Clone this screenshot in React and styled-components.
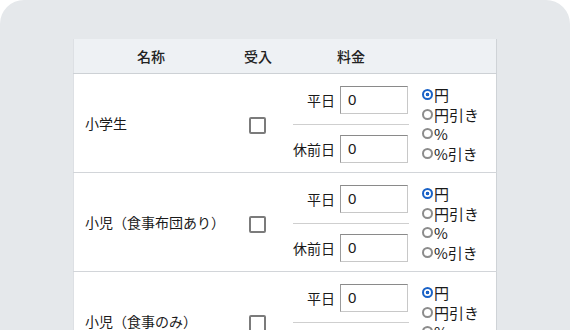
import React from "react";
import styled, { createGlobalStyle } from "styled-components";

const GlobalStyle = createGlobalStyle`
	html, body {
		margin: 0;
		padding: 0;
		background: #ffffff;
	}
	body {
		font-family: "Noto Sans CJK JP", "Noto Sans", sans-serif;
		color: #1a1a1a;
	}
`;

const Panel = styled.div`
	width: 570px;
	height: 330px;
	box-sizing: border-box;
	background: #e5e8eb;
	border-radius: 24px 24px 0 0;
	padding: 39px 0 0 73px;
	overflow: hidden;
`;

const Table = styled.table`
	width: 422px;
	table-layout: fixed;
	border-collapse: collapse;
	background: #fff;
	border-left: 1px solid #dde0e4;
	border-right: 1px solid #cfd3d7;
`;

const HeadCell = styled.th`
	height: 34px;
	padding: 0;
	background: #eef1f4;
	border-bottom: 1px solid #cdd1d5;
	font-size: 14px;
	font-weight: 500;
	color: #222;
	text-align: center;
	width: ${(p) => p.$w}px;
`;

const Row = styled.tr`
	border-bottom: 1px solid #d2d5d9;
`;

const NameCell = styled.td`
	padding: 0 0 0 11px;
	font-size: 14px;
	white-space: nowrap;
	vertical-align: middle;
`;

const CheckCell = styled.td`
	padding: 0;
	text-align: center;
	vertical-align: middle;
`;

const CheckBox = styled.span`
	display: inline-block;
	width: 17px;
	height: 17px;
	box-sizing: border-box;
	border: 2.5px solid #7b7b7b;
	border-radius: 2px;
	background: #fff;
	vertical-align: middle;
	margin-left: -1px;
`;

const PriceCell = styled.td`
	padding: 12px 5px 9px 5px;
	vertical-align: top;
`;

const PriceLine = styled.div`
	display: flex;
	align-items: center;
	gap: 5px;
`;

const PriceLabel = styled.span`
	width: 42px;
	text-align: right;
	font-size: 14px;
	white-space: nowrap;
`;

const PriceInput = styled.div`
	width: 68px;
	height: 28px;
	box-sizing: border-box;
	border: 1px solid #c8c8c8;
	border-top-color: #8a8a8a;
	border-left-color: #9a9a9a;
	padding-left: 7px;
	font-family: "Liberation Sans", Arial, sans-serif;
	font-size: 15px;
	line-height: 26px;
	color: #1a1a1a;
`;

const Divider = styled.div`
	height: 1px;
	background: #cfcfcf;
	margin: 10px 0;
	width: 116px;
`;

const RadioCell = styled.td`
	padding: 0 0 0 8px;
	vertical-align: middle;
`;

const RadioList = styled.div`
	display: flex;
	flex-direction: column;
	margin-top: 2px;
`;

const RadioItem = styled.div`
	display: flex;
	align-items: center;
	height: 19.7px;
	font-size: 15px;
	white-space: nowrap;
`;

const RadioDot = styled.span`
	width: 11px;
	height: 11px;
	box-sizing: border-box;
	border-radius: 50%;
	border: 2.8px solid ${(p) => (p.$on ? "#1a62c7" : "#8c8c8c")};
	background: ${(p) =>
		p.$on ? "radial-gradient(circle, #1a62c7 0 1.6px, #fff 2.1px)" : "#fff"};
	margin-right: 1px;
	flex: none;
`;

const options = ["円", "円引き", "%", "%引き"];

const rows = ["小学生", "小児（食事布団あり）", "小児（食事のみ）"];

function PriceRow({ name }) {
	return (
		<Row>
			<NameCell>{name}</NameCell>
			<CheckCell>
				<CheckBox />
			</CheckCell>
			<PriceCell>
				<PriceLine>
					<PriceLabel>平日</PriceLabel>
					<PriceInput>0</PriceInput>
				</PriceLine>
				<Divider />
				<PriceLine>
					<PriceLabel>休前日</PriceLabel>
					<PriceInput>0</PriceInput>
				</PriceLine>
			</PriceCell>
			<RadioCell>
				<RadioList>
					{options.map((o, i) => (
						<RadioItem key={o}>
							<RadioDot $on={i === 0} />
							{o}
						</RadioItem>
					))}
				</RadioList>
			</RadioCell>
		</Row>
	);
}

export default function App() {
	return (
		<>
			<GlobalStyle />
			<Panel>
				<Table>
					<thead>
						<tr>
							<HeadCell $w={154}>名称</HeadCell>
							<HeadCell $w={60}>受入</HeadCell>
							<HeadCell $w={126}>料金</HeadCell>
							<HeadCell $w={82}></HeadCell>
						</tr>
					</thead>
					<tbody>
						{rows.map((r) => (
							<PriceRow key={r} name={r} />
						))}
					</tbody>
				</Table>
			</Panel>
		</>
	);
}
